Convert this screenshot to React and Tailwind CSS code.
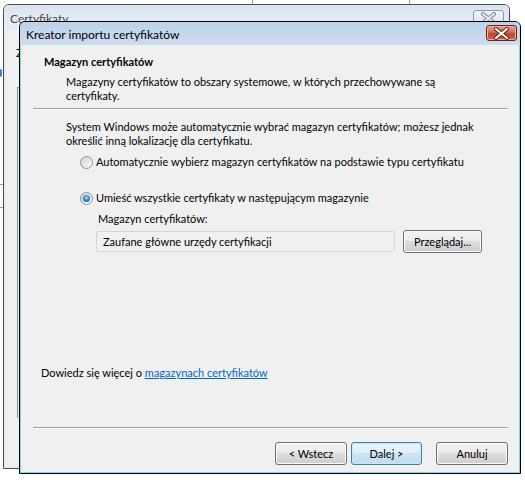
import React from "react";

const FONT = { fontFamily: "Lato, 'Liberation Sans', sans-serif" };

function CloseGlyph({ color = "#fff", outline = "#5a1a10", w = 11, h = 9 }) {
  return (
    <svg width={w + 4} height={h + 4} viewBox={`-2 -2 ${w + 4} ${h + 4}`}>
      <path d={`M0 0 L${w} ${h} M${w} 0 L0 ${h}`} stroke={outline} strokeWidth="4" strokeLinecap="square" />
      <path d={`M0 0 L${w} ${h} M${w} 0 L0 ${h}`} stroke={color} strokeWidth="2" strokeLinecap="square" />
    </svg>
  );
}

function Radio({ checked }) {
  return (
    <span className="w-[13px] h-[13px] rounded-full border border-[#8e8f8f] bg-[linear-gradient(135deg,#cfcfcf,#f4f4f4_70%,#ffffff)] flex items-center justify-center shrink-0">
      {checked ? (
        <span className="w-[7px] h-[7px] rounded-full bg-[radial-gradient(circle_at_50%_40%,#a9dcfb_0%,#3b8fd0_45%,#0d3e72_100%)]" />
      ) : (
        <span className="w-[9px] h-[9px] rounded-full bg-[linear-gradient(135deg,#d7d7d7,#f7f7f7)]" />
      )}
    </span>
  );
}

function Btn({ children, def, className = "" }) {
  return (
    <div
      className={
        "h-[23px] rounded-[3px] border flex items-center justify-center text-[11px] text-black " +
        (def
          ? "border-[#3c7fb1] shadow-[inset_0_0_0_1px_#c4e8fb] bg-[linear-gradient(to_bottom,#eaf5fc_0%,#e0eff9_50%,#cfe5f4_50%,#c1dcef_100%)] "
          : "border-[#707070] shadow-[inset_0_0_0_1px_#fbfbfb] bg-[linear-gradient(to_bottom,#f2f2f2_0%,#ebebeb_50%,#dddddd_50%,#cfcfcf_100%)] ") +
        className
      }
    >
      {children}
    </div>
  );
}

export default function App() {
  return (
    <div className="relative w-[525px] h-[482px] bg-white overflow-hidden" style={FONT}>
      {/* desktop bits */}
      <div className="absolute left-[252px] top-0 w-px h-[4px] bg-[#a0a0a0]" />
      <div className="absolute left-[409px] top-0 w-px h-[4px] bg-[#a0a0a0]" />
      <div className="absolute left-0 top-[184px] w-[3px] h-px bg-[#a0a0a0]" />
      <div className="absolute left-0 top-[207px] w-[3px] h-px bg-[#a0a0a0]" />
      <div className="absolute left-0 top-[69px] w-[2px] h-[8px] border-r-2 border-y border-[#3b7bd0] rounded-r-[3px]" />

      {/* background window */}
      <div className="absolute left-[3px] top-[4px] w-[507px] h-[465px] border border-[#4c4c4c] rounded-t-[6px] bg-[#e3ebf5] flex flex-col overflow-hidden">
        <div className="h-[25px] bg-[linear-gradient(to_bottom,#dbe5f1,#e8eef7)] flex items-start justify-between">
          <span className="pl-[6px] pt-[6px] text-[12px] text-[#4a4a4a] leading-[15px]">Certyfikaty</span>
          <div className="mt-[5px] mr-[5px] w-[31px] h-[17px] rounded-[3px] border border-[#8a9aab] bg-[linear-gradient(to_bottom,#f3f6fa,#d7e0eb)] flex items-center justify-center">
            <CloseGlyph color="#e4e9ef" outline="#7c8794" />
          </div>
        </div>
        <div className="flex-1 mx-[2px] mb-[2px] bg-[#f0f0f0] relative">
          <span className="absolute left-[10px] top-[17px] text-[12px] text-black leading-none">Z</span>
          <div className="absolute left-[11px] top-[57px] w-[4px] h-[331px] border-l border-t border-[#8d8d8d]" />
        </div>
      </div>

      {/* foreground window */}
      <div className="absolute left-[19px] top-[21px] w-[502px] h-[453px] border border-[#000] rounded-t-[6px] bg-[#7fd3f1] flex flex-col overflow-hidden">
        <div className="h-[23px] shrink-0 bg-[linear-gradient(to_bottom,#bcd2ea,#cddcef)] flex items-start justify-between">
          <span className="pl-[6px] pt-[5px] text-[12px] text-black leading-[15px]">Kreator importu certyfikatów</span>
          <div className="mt-[3px] mr-[3px] w-[31px] h-[16px] rounded-[3px] border border-[#6e2418] bg-[linear-gradient(to_bottom,#e7a394_0%,#d26a55_45%,#c2442c_55%,#d0604a_100%)] shadow-[inset_0_0_0_1px_#eab0a4] flex items-center justify-center">
            <CloseGlyph />
          </div>
        </div>
        <div className="flex-1 mx-px mb-px bg-[#f0f0f0] flex flex-col text-[11px] leading-[14px] text-black">
          {/* header */}
          <div className="pl-[23px] pt-[10px] font-bold">Magazyn certyfikatów</div>
          <div className="pl-[45px] pt-[6px] pr-[20px]">
            <div>Magazyny certyfikatów to obszary systemowe, w których przechowywane są</div>
            <div>certyfikaty.</div>
          </div>
          <div className="ml-[12px] mt-[5px] w-[475px] h-px bg-[#a0a0a0] border-b border-white box-content" />
          <div className="pl-[45px] pt-[10px]">
            <div>System Windows może automatycznie wybrać magazyn certyfikatów; możesz jednak</div>
            <div>określić inną lokalizację dla certyfikatu.</div>
          </div>
          <div className="pl-[59px] pt-[7px] flex items-center gap-[3px]">
            <Radio />
            <span>Automatycznie wybierz magazyn certyfikatów na podstawie typu certyfikatu</span>
          </div>
          <div className="pl-[59px] pt-[22px] flex items-center gap-[3px]">
            <Radio checked />
            <span>Umieść wszystkie certyfikaty w następującym magazynie</span>
          </div>
          <div className="pl-[77px] pt-[7px]">Magazyn certyfikatów:</div>
          <div className="pl-[75px] pt-[4px] flex items-center">
            <div className="w-[299px] h-[21px] rounded-[2px] border border-[#d5d5d5] bg-[#f0f0f0] flex items-center pl-[6px]">
              Zaufane główne urzędy certyfikacji
            </div>
            <Btn className="ml-[8px] w-[79px] h-[21px]">Przeglądaj...</Btn>
          </div>
          <div className="flex-1" />
          <div className="pl-[20px]">
            Dowiedz się więcej o{" "}
            <span className="text-[#0066cc] underline">magazynach certyfikatów</span>
          </div>
          <div className="ml-[12px] mt-[47px] w-[475px] h-px bg-[#a0a0a0] border-b border-white box-content" />
          <div className="flex justify-end pr-[11px] pt-[13px] pb-[7px]">
            <Btn className="w-[72px]">&lt; Wstecz</Btn>
            <Btn def className="ml-[4px] w-[71px]">Dalej &gt;</Btn>
            <Btn className="ml-[14px] w-[72px]">Anuluj</Btn>
          </div>
        </div>
      </div>
    </div>
  );
}
